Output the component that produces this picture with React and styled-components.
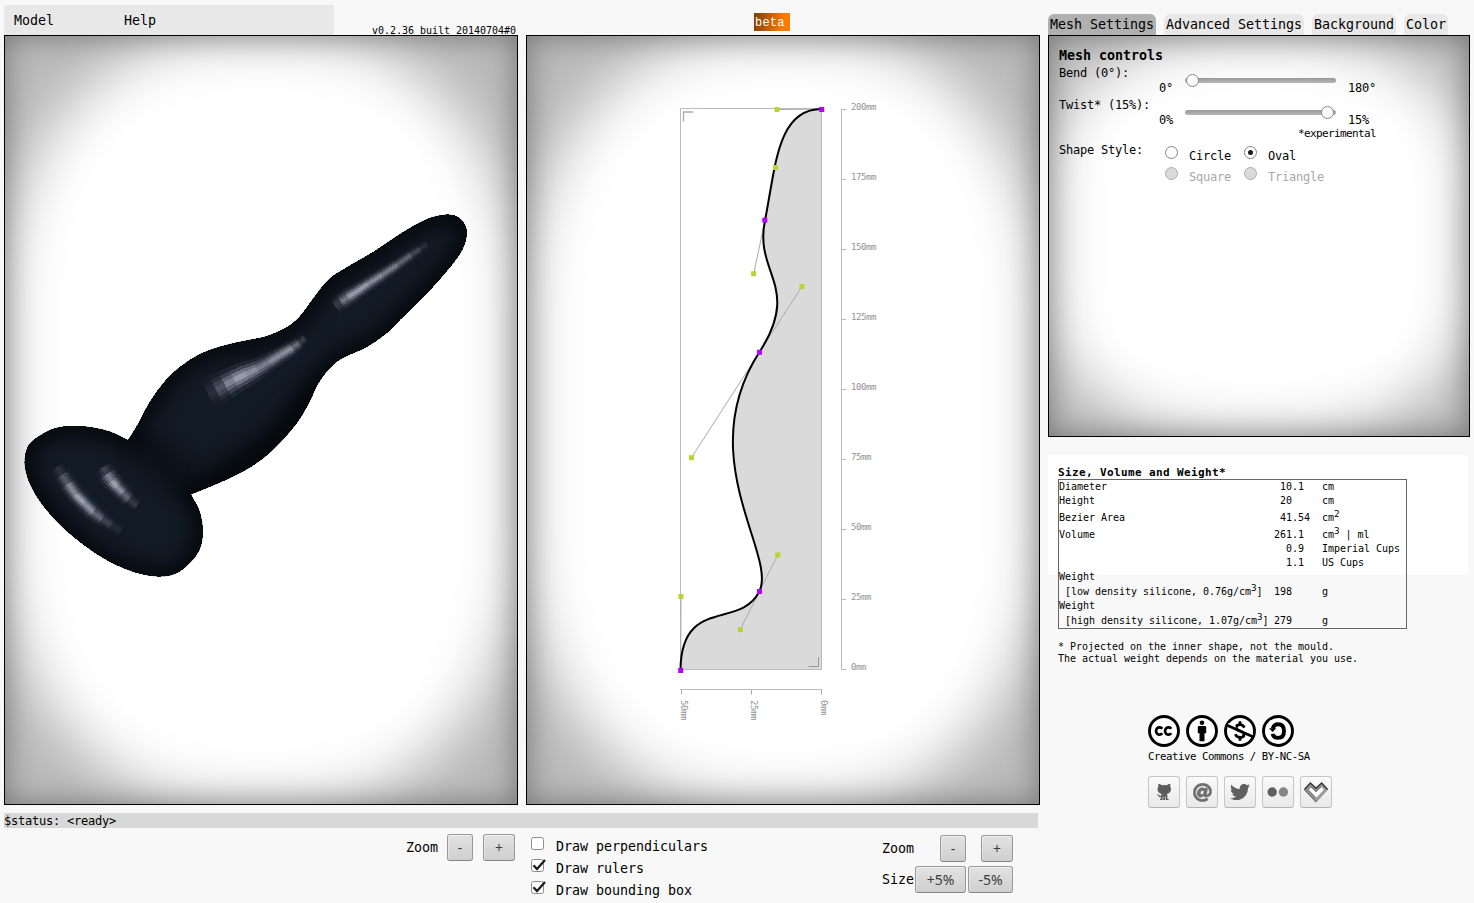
import React from "react";
import styled, { createGlobalStyle, css } from "styled-components";
import { FaTwitter, FaAt } from "react-icons/fa";

const GlobalStyle = createGlobalStyle`
  * { box-sizing: border-box; }
  body {
    margin: 0;
    background: #f8f8f8;
    color: #000;
    font-family: "DejaVu Sans Mono", monospace;
    overflow: hidden;
  }
`;

/* Monospace text with a fixed advance (px) per character. */
const mono = (size, advance) => css`
  font-size: ${size}px;
  letter-spacing: ${(advance - size * 0.60205).toFixed(4)}px;
  white-space: pre;
`;

const Page = styled.div`
  display: flex;
  gap: 8px;
  width: 1474px;
  height: 903px;
  padding-left: 4px;
`;

const Main = styled.main`
  display: flex;
  flex-direction: column;
  width: 1036px;
`;

const Side = styled.aside`
  display: flex;
  flex-direction: column;
  width: 422px;
`;

const Header = styled.header`
  display: flex;
  height: 35px;
`;

const Menu = styled.nav`
  display: flex;
  width: 330px;
  height: 30px;
  margin-top: 5px;
  padding-left: 10px;
  background: #e8e8e8;
`;

const MenuItem = styled.span`
  ${mono(13.33, 8)}
  width: 110px;
  line-height: 32px;
`;

const Version = styled.span`
  ${mono(10, 6)}
  width: 182px;
  padding-top: 25px;
  text-align: right;
  line-height: 12px;
`;

const Beta = styled.span`
  margin: 13px 0 0 238px;
  width: 36px;
  height: 18px;
  padding-left: 1px;
  background: linear-gradient(100deg, #7d3e00, #ff7b00 80%);
  color: #fff;
  font: 12px/20px "Liberation Mono", monospace;
  letter-spacing: 0.2px;
`;

const Panels = styled.div`
  display: flex;
  gap: 8px;
`;

const Panel = styled.section`
  position: relative;
  overflow: hidden;
  width: ${(p) => p.$w}px;
  height: ${(p) => p.$h}px;
  border: 1px solid #000;
  background: #b9b9b9;

  &::before {
    content: "";
    position: absolute;
    inset: 0;
    background: #fff;
    border-radius: 42% / 33%;
    filter: blur(29px);
  }
  &::after {
    content: "";
    position: absolute;
    inset: 0;
    box-shadow: inset 0 0 30px rgba(0, 0, 0, 0.37);
    pointer-events: none;
  }
  > * {
    position: relative;
    z-index: 1;
  }
`;

const Canvas = styled.svg`
  display: block;
`;

const Status = styled.div`
  ${mono(12, 7)}
  width: 1034px;
  height: 15px;
  margin-top: 8px;
  background: #d8d8d8;
  line-height: 16px;
`;

const Controls = styled.div`
  display: flex;
`;

const ControlRow = styled.div`
  display: flex;
  align-items: center;
  height: 27px;
  margin-bottom: 4px;
`;

const PreviewZoom = styled.div`
  width: 527px;
  padding: 6px 0 0 402px;
`;

const Checks = styled.div`
  width: 351px;
  padding-top: 9px;
`;

const EditorZoom = styled.div`
  padding-top: 7px;
`;

const ControlLabel = styled.span`
  ${mono(13.33, 8)}
  width: ${(p) => p.$w}px;
`;

const Button = styled.button`
  width: ${(p) => p.$w}px;
  height: 27px;
  margin: 0 ${(p) => p.$mr || 0}px 0 0;
  padding: 0;
  border: 1px solid #999;
  border-bottom-color: #858585;
  border-radius: 3px;
  background: linear-gradient(#e2e2e2, #cfcfcf);
  box-shadow: inset 0 1px 0 #f2f2f2, inset 1px 0 0 rgba(255, 255, 255, 0.35);
  color: #3c3c3c;
  font: 14px/24px "Noto Sans", sans-serif;
`;

const CheckRow = styled.label`
  display: flex;
  height: 22px;
  ${mono(13.33, 8)}
  line-height: 20px;
  svg {
    width: 25px;
    height: 16px;
    overflow: visible;
  }
`;

const Tabs = styled.nav`
  display: flex;
  gap: 8px;
  height: 35px;
  padding-top: 14px;
`;

const Tab = styled.span`
  ${mono(13.33, 8)}
  height: 21px;
  width: ${(p) => p.$w}px;
  padding-left: 2px;
  border-radius: 6px 6px 0 0;
  background: ${(p) => (p.$active ? "#b0b0b0" : "#e8e8e8")};
  line-height: 22px;
`;

const Settings = styled.div`
  padding: 11px 0 0 10px;
`;

const SettingsTitle = styled.h2`
  ${mono(13.33, 8)}
  margin: 0;
  height: 17px;
  line-height: 17px;
`;

const SettingRow = styled.div`
  ${mono(12, 7)}
  display: flex;
  height: ${(p) => p.$h || 32}px;
  line-height: 18px;
`;

const SettingLabel = styled.span`
  width: 100px;
`;

const RangeEnd = styled.span`
  width: ${(p) => p.$w}px;
  padding-top: 15px;
`;

const Track = styled.div`
  display: flex;
  align-items: center;
  justify-content: ${(p) => (p.$end ? "flex-end" : "flex-start")};
  width: 151px;
  height: 5px;
  margin: 14px 12px 0 0;
  border-radius: 3px;
  background: linear-gradient(#989898, #b8b8b8);
`;

const Thumb = styled.span`
  width: 13px;
  height: 13px;
  margin: 0 2px 0 1px;
  border: 1px solid #888;
  border-radius: 50%;
  background: linear-gradient(#fff, #f6f6f6);
`;

const Note = styled.div`
  ${mono(11, 6)}
  height: 13px;
  padding-left: 239px;
  line-height: 12px;
`;

const Options = styled.div`
  display: grid;
  grid-template-columns: 79px 100px;
  grid-auto-rows: 21px;
  padding-left: 6px;
`;

const Option = styled.span`
  display: flex;
  gap: 11px;
  color: ${(p) => (p.$disabled ? "#a8a8a8" : "#000")};
  line-height: 31px;
`;

const Radio = styled.span`
  display: grid;
  place-items: center;
  width: 13px;
  height: 13px;
  margin-top: 5px;
  border: 1px solid ${(p) => (p.$disabled ? "#adadad" : "#858585")};
  border-radius: 50%;
  background: ${(p) => (p.$disabled ? "#dadada" : "#fff")};
  &::after {
    content: "";
    width: 5px;
    height: 5px;
    border-radius: 50%;
    background: ${(p) => (p.$on ? "#1c1c1c" : "transparent")};
  }
`;

const Stats = styled.section`
  width: 420px;
  height: 120px;
  margin-top: 18px;
  padding: 11px 0 0 10px;
  background: #fff;
`;

const StatsTitle = styled.h3`
  ${mono(11, 7)}
  margin: 0;
  height: 13px;
  line-height: 13px;
`;

const StatsTable = styled.div`
  ${mono(10, 6)}
  width: 349px;
  height: 150px;
  border: 1px solid #666;
`;

const StatsRow = styled.div`
  display: flex;
  align-items: flex-end;
  height: ${(p) => p.$h}px;
  line-height: 14px;
`;

const Cell = styled.span`
  width: ${(p) => p.$w}px;
  height: 14px;
`;

const Sup = styled.sup`
  position: relative;
  top: -4px;
  vertical-align: baseline;
  line-height: 0;
  font-size: 9.3px;
`;

const Footnote = styled.p`
  ${mono(10, 6)}
  margin: 66px 0 0 10px;
  height: 24px;
  line-height: 12px;
`;

const Footer = styled.footer`
  display: flex;
  flex-direction: column;
  margin: 50px 0 0 100px;
`;

const IconRow = styled.div`
  display: flex;
  gap: 6px;
`;

const License = styled.div`
  ${mono(10.7, 6)}
  height: 29px;
  line-height: 19px;
`;

const SocialButton = styled.span`
  display: grid;
  place-items: center;
  width: 32px;
  height: 32px;
  border: 1px solid #c6c6c6;
  border-bottom-color: #b4b4b4;
  border-radius: 3px;
  background: linear-gradient(#fafafa, #e9e9e9);
  color: #5c5c5c;
`;

/* ---------- 3D preview ---------- */

const OUTLINE_BASE = [
  [128, 440], [110, 431.5], [90, 427], [73, 426], [55, 428], [39, 436], [28, 446],
  [24.5, 463], [29, 482], [41, 503], [60, 525], [85, 546], [110, 562], [135, 572.5],
  [157, 576.5], [175, 574], [190, 563], [200, 549], [203, 532], [200, 512], [191, 494.5],
];

const OUTLINE_BODY = [
  [191, 494.5], [212, 486], [230, 478], [250, 467.5], [273, 450], [297, 423], [310, 401],
  [318, 384], [330, 368], [343, 358], [367, 347], [387, 333], [400, 320], [433, 287],
  [458, 257], [466, 240], [466, 227], [458, 217], [446, 214.5], [427, 219], [403, 232],
  [373, 252], [347, 267], [328, 280], [312, 300], [300, 316], [287, 327], [267, 336],
  [243, 341], [220, 346.5], [200, 354], [181, 366], [165, 381], [149, 403], [138, 424],
  [128, 440],
];

function smooth(points) {
  let d = "";
  for (let i = 0; i < points.length - 1; i++) {
    const a = points[Math.max(0, i - 1)];
    const b = points[i];
    const c = points[i + 1];
    const e = points[Math.min(points.length - 1, i + 2)];
    d += ` C${b[0] + (c[0] - a[0]) / 6} ${b[1] + (c[1] - a[1]) / 6} ${c[0] - (e[0] - b[0]) / 6} ${c[1] - (e[1] - b[1]) / 6} ${c[0]} ${c[1]}`;
  }
  return d;
}

const SOLID = `M128 440${smooth(OUTLINE_BASE)}${smooth(OUTLINE_BODY)}Z`;

/* Each spine point: x, y, half width, brightness. */
const HIGHLIGHTS = [
  [[335, 306, 9, 0.1], [341, 302, 9, 0.45], [348, 297, 9, 0.9], [356, 292, 8, 1], [368, 284, 7.5, 0.9], [382, 275, 7, 0.78], [397, 265, 6.5, 0.65], [411, 255, 6, 0.45], [420, 249, 5, 0.25], [427, 244, 5, 0.08]],
  [[208, 394, 16, 0.06], [216, 390, 16, 0.26], [225, 385, 15, 0.6], [234, 380, 14, 0.95], [246, 374, 13, 1], [257, 369, 11, 0.75], [269, 362, 9, 0.75], [282, 354, 8.5, 0.95], [292, 348, 8, 0.8], [299, 343, 7, 0.4], [305, 338, 6, 0.15]],
  [[57, 467, 8, 0.05], [62, 475, 9, 0.3], [68, 484, 9, 0.65], [76, 495, 9, 1], [84, 503, 9, 1], [93, 512, 9, 0.75], [102, 519, 8, 0.42], [111, 525, 7, 0.2], [121, 531, 7, 0.04]],
  [[103, 467, 9, 0.1], [107, 474, 10, 0.5], [112, 481, 10, 1], [117, 487, 9, 1], [123, 493, 9, 0.7], [129, 499, 8, 0.38], [137, 506, 7, 0.08]],
];

const BANDS = [-1, -0.7, -0.45, -0.2, 0.2, 0.45, 0.7, 1];

function facets(spine) {
  const normal = (i) => {
    const p = spine[Math.max(0, i - 1)];
    const q = spine[Math.min(spine.length - 1, i + 1)];
    const len = Math.hypot(q[0] - p[0], q[1] - p[1]);
    return [-(q[1] - p[1]) / len, (q[0] - p[0]) / len];
  };
  const out = [];
  for (let i = 0; i < spine.length - 1; i++) {
    const a = spine[i];
    const b = spine[i + 1];
    const na = normal(i);
    const nb = normal(i + 1);
    for (let k = 0; k < BANDS.length - 1; k++) {
      const u = BANDS[k];
      const v = BANDS[k + 1];
      const mid = (u + v) / 2;
      const alpha = ((a[3] + b[3]) / 2) * Math.exp(-mid * mid * 3) * 0.76;
      const at = (s, n, t) => `${s[0] + n[0] * s[2] * t},${s[1] + n[1] * s[2] * t}`;
      out.push({ points: [at(a, na, u), at(b, nb, u), at(b, nb, v), at(a, na, v)].join(" "), alpha });
    }
  }
  return out;
}

function Preview() {
  return (
    <Canvas width="512" height="768" viewBox="5 36 512 768">
      <defs>
        <clipPath id="solid"><path d={SOLID} /></clipPath>
        <filter id="soft" x="-20%" y="-20%" width="140%" height="140%" colorInterpolationFilters="sRGB">
          <feGaussianBlur stdDeviation="9" />
        </filter>
      </defs>
      <path d={SOLID} fill="#121a25" shapeRendering="crispEdges" />
      <g clipPath="url(#solid)">
        <path d={SOLID} fill="none" stroke="#020303" strokeWidth="17" opacity="0.8" filter="url(#soft)" />
        <path d="M128 440Q165 455 191 494" fill="none" stroke="#06080b" strokeWidth="30" opacity="0.5" filter="url(#soft)" />
        <path d="M205 480 Q290 435 312 385" fill="none" stroke="#000" strokeWidth="22" opacity="0.4" filter="url(#soft)" />
        {HIGHLIGHTS.flatMap((h, i) =>
          facets(h).map((f, k) => (
            <polygon key={`${i}-${k}`} points={f.points} fill="#c4c8d6" opacity={f.alpha} shapeRendering="crispEdges" />
          ))
        )}
      </g>
    </Canvas>
  );
}

/* ---------- Bezier editor ---------- */

const CURVE =
  "M821.5 109 C777 109 775.5 167.5 765 220.5 C753.7 273.7 802 286.5 759.3 352.3 C691.5 457.7 777.8 555 759.3 591.5 C740.3 629.7 681 596.5 680.5 670";
const HANDLES = [
  [821.5, 109, 777, 109.5], [765, 220.5, 775.5, 167.5], [765, 220.5, 753.7, 273.7],
  [759.3, 352.3, 802, 286.5], [759.3, 352.3, 691.5, 457.7], [759.3, 591.5, 777.8, 555],
  [759.3, 591.5, 740.3, 629.7], [680.7, 670, 681, 596.5],
];
const ANCHORS = [[821.7, 109.5], [764.8, 220.2], [759.5, 352.3], [759.5, 591.5], [680.7, 670.5]];

const RulerText = styled.text`
  ${mono(9, 5)}
  fill: #939393;
`;

function Editor() {
  return (
    <Canvas width="512" height="768" viewBox="527 36 512 768">
      <path d={`${CURVE} L821.5 670 L821.5 109Z`} fill="#dadada" />
      <rect x="680.5" y="108.5" width="141" height="561" fill="none" stroke="#bbb" />
      <path d="M683.5 121.500V112H693" fill="none" stroke="#aaa" strokeWidth="1.3" />
      <path d="M818.500 657V666.500H808.500" fill="none" stroke="#999" />
      {HANDLES.map(([x1, y1, x2, y2], i) => (
        <line key={i} x1={x1} y1={y1} x2={x2} y2={y2} stroke="#aaa" strokeWidth="1" />
      ))}
      <path d={CURVE} fill="none" stroke="#000" strokeWidth="2" />
      {HANDLES.map(([, , x, y], i) => (
        <rect key={i} x={x - 2.5} y={y - 2.5} width="5" height="5" fill="#b8d432" />
      ))}
      {ANCHORS.map(([x, y], i) => (
        <rect key={i} x={x - 2.5} y={y - 2.5} width="5" height="5" fill="#b400ff" />
      ))}
      <path d="M841.500 109V670M680 689.500H822" stroke="#bbb" fill="none" />
      {[200, 175, 150, 125, 100, 75, 50, 25, 0].map((mm, i) => (
        <g key={mm}>
          <line x1="841" x2="846.500" y1={109.5 + i * 70} y2={109.5 + i * 70} stroke="#bbb" />
          <RulerText x="851" y={110 + i * 70}>{mm}mm</RulerText>
        </g>
      ))}
      {[[50, 681.5], [25, 751.5], [0, 821.5]].map(([mm, x]) => (
        <g key={mm}>
          <line x1={x} x2={x} y1="690" y2="694.500" stroke="#aaa" />
          <RulerText transform={`translate(${x - 1} 700) rotate(90)`}>{mm}mm</RulerText>
        </g>
      ))}
    </Canvas>
  );
}

function Check({ on, children }) {
  return (
    <CheckRow>
      <svg viewBox="0 0 25 16">
        <rect x="0.5" y="0.500" width="12" height="12" rx="2" fill="#fff" stroke="#8c8c8c" />
        {on && <path d="M2.500 6.200L6 10L14 1" fill="none" stroke="#1e1e1e" strokeWidth="2.300" />}
      </svg>
      {children}
    </CheckRow>
  );
}

/* ---------- Icons ---------- */

const Badge = ({ children }) => (
  <svg width="32" height="32" viewBox="0 0 32 32" fill="none" stroke="#000">
    <circle cx="16" cy="16" r="14.500" fill="#fff" strokeWidth="2.900" />
    {children}
  </svg>
);

const LicenseCC = () => (
  <Badge>
    <path d="M14.300 13.700A3.500 3.700 0 1 0 14.300 18.300M23.300 13.700A3.500 3.700 0 1 0 23.300 18.300" strokeWidth="2.700" />
  </Badge>
);

const LicenseBy = () => (
  <Badge>
    <g fill="#000" stroke="none">
      <circle cx="16" cy="7.800" r="2.300" />
      <path d="M12.900 10.900H19.100Q20.200 10.900 20.200 12V18.200H18.500V26.200H13.500V18.200H11.800V12Q11.800 10.900 12.900 10.900Z" />
    </g>
  </Badge>
);

const LicenseNC = () => (
  <Badge>
    <path d="M20.400 12.600Q19 9.600 16 9.600Q12.200 9.600 12.200 12.500Q12.200 14.700 16 16Q20 17.300 20 19.500Q20 22.500 16.200 22.500Q12.700 22.500 11.300 19.300M16 6.300V10M16 22V25.800" strokeWidth="2.800" />
    <path d="M4 8.700L12 12.300M20 15.900L29 19.900" stroke="#fff" strokeWidth="1.300" />
    <path d="M2.500 10L29.500 22" strokeWidth="2.700" />
  </Badge>
);

const LicenseSA = () => (
  <Badge>
    <path d="M10.800 13.500Q11.800 9.300 16.200 9.300Q22 9.300 22 16.100Q22 22.900 16.200 22.900Q11.500 22.900 10.600 18.900" strokeWidth="3.900" />
    <path d="M7 13.300H14.200L10.600 17Z" fill="#000" stroke="none" />
  </Badge>
);

const Octocat = () => (
  <svg width="16" height="18" viewBox="0 0 16 18">
    <path
      fill="currentColor"
      d="M2.600.8C3.900.9 5 1.700 5.600 2.200Q8.300 1.700 11 2.200C11.700 1.600 12.800.9 14 .8C14.500 2 14.500 2.900 14.200 3.800C15.800 5.800 15.300 10.300 10.700 10.900C11.300 11.500 11.400 12 11.400 13V15.700H12.600V17H9.800V13.500H9.100V17H7.300V13.500H6.700V17H4V15.700H5.100V14.200C2.500 14.700 2.700 12.600 1.500 12.100L.6 11.500C2.700 10.800 3 13 5.100 12.700C5.100 11.900 5.300 11.400 5.900 10.900C1.200 10.300.8 5.800 2.400 3.800C2.100 2.800 2.100 1.900 2.600.8Z"
    />
  </svg>
);

const Dots = () => (
  <svg width="22" height="10" viewBox="0 0 22 10">
    <circle cx="5.200" cy="5" r="4.700" fill="#5f5f5f" />
    <circle cx="16.400" cy="5" r="4.700" fill="#868686" />
  </svg>
);

const Heart = () => (
  <svg width="26" height="24" viewBox="0 0 26 24">
    <path d="M.8 9.500L7.300 2.300L13 7.600L18.700 2.300L25.200 9.500L13 22.700Z" fill="#9a9a9a" />
    <path d="M1.500 9.500L7.300 3L13 8.400L18.700 3L24.500 9.500" fill="none" stroke="#3c3c3c" strokeWidth="1.500" />
    <path d="M1.500 9.500L13 21.700" fill="none" stroke="#777" strokeWidth="1.200" />
    <path d="M5 9.700L7.800 6.700L13 11.700L18.200 6.700L21 9.700L13 18Z" fill="#fafafa" />
    <path d="M13 18L5 9.700L7.800 6.700L13 11.700L18.200 6.700" fill="none" stroke="#555" strokeWidth="0.900" />
  </svg>
);

const STATS = [
  [14, "Diameter", " 10.1", "cm"],
  [14, "Height", " 20", "cm"],
  [17, "Bezier Area", " 41.54", <>cm<Sup>2</Sup></>],
  [17, "Volume", "261.1", <>cm<Sup>3</Sup> | ml</>],
  [14, "", "  0.9", "Imperial Cups"],
  [14, "", "  1.1", "US Cups"],
  [14, "Weight", "", ""],
  [15, <> [low density silicone, 0.76g/cm<Sup>3</Sup>]</>, "198", "g"],
  [14, "Weight", "", ""],
  [15, <> [high density silicone, 1.07g/cm<Sup>3</Sup>]</>, "279", "g"],
];

export default function App() {
  return (
    <Page>
      <GlobalStyle />
      <Main>
        <Header>
          <Menu>
            <MenuItem>Model</MenuItem>
            <MenuItem>Help</MenuItem>
          </Menu>
          <Version>v0.2.36 built 20140704#0</Version>
          <Beta>beta</Beta>
        </Header>
        <Panels>
          <Panel $w={514} $h={770}><Preview /></Panel>
          <Panel $w={514} $h={770}><Editor /></Panel>
        </Panels>
        <Status>$status: &lt;ready&gt;</Status>
        <Controls>
          <PreviewZoom>
            <ControlRow>
              <ControlLabel $w={41}>Zoom</ControlLabel>
              <Button $w={26} $mr={10}>-</Button>
              <Button $w={32}>+</Button>
            </ControlRow>
          </PreviewZoom>
          <Checks>
            <Check>Draw perpendiculars</Check>
            <Check on>Draw rulers</Check>
            <Check on>Draw bounding box</Check>
          </Checks>
          <EditorZoom>
            <ControlRow>
              <ControlLabel $w={58}>Zoom</ControlLabel>
              <Button $w={26} $mr={15}>-</Button>
              <Button $w={32}>+</Button>
            </ControlRow>
            <ControlRow>
              <ControlLabel $w={33}>Size</ControlLabel>
              <Button $w={51} $mr={2}>+5%</Button>
              <Button $w={45}>-5%</Button>
            </ControlRow>
          </EditorZoom>
        </Controls>
      </Main>
      <Side>
        <Tabs>
          <Tab $w={108} $active>Mesh Settings</Tab>
          <Tab $w={140}>Advanced Settings</Tab>
          <Tab $w={84}>Background</Tab>
          <Tab $w={44}>Color</Tab>
        </Tabs>
        <Panel $w={422} $h={402}>
          <Settings>
            <SettingsTitle>Mesh controls</SettingsTitle>
            <SettingRow>
              <SettingLabel>Bend (0°):</SettingLabel>
              <RangeEnd $w={26}>0°</RangeEnd>
              <Track><Thumb /></Track>
              <RangeEnd $w={40}>180°</RangeEnd>
            </SettingRow>
            <SettingRow>
              <SettingLabel>Twist* (15%):</SettingLabel>
              <RangeEnd $w={26}>0%</RangeEnd>
              <Track $end><Thumb /></Track>
              <RangeEnd $w={40}>15%</RangeEnd>
            </SettingRow>
            <Note>*experimental</Note>
            <SettingRow $h={44}>
              <SettingLabel>Shape Style:</SettingLabel>
              <Options>
                <Option><Radio />Circle</Option>
                <Option><Radio $on />Oval</Option>
                <Option $disabled><Radio $disabled />Square</Option>
                <Option $disabled><Radio $disabled />Triangle</Option>
              </Options>
            </SettingRow>
          </Settings>
        </Panel>
        <Stats>
          <StatsTitle>Size, Volume and Weight*</StatsTitle>
          <StatsTable>
            {STATS.map(([h, label, value, unit], i) => (
              <StatsRow key={i} $h={h}>
                <Cell $w={215}>{label}</Cell>
                <Cell $w={48}>{value}</Cell>
                <Cell $w={84}>{unit}</Cell>
              </StatsRow>
            ))}
          </StatsTable>
        </Stats>
        <Footnote>{"* Projected on the inner shape, not the mould.\nThe actual weight depends on the material you use."}</Footnote>
        <Footer>
          <IconRow>
            <LicenseCC />
            <LicenseBy />
            <LicenseNC />
            <LicenseSA />
          </IconRow>
          <License>Creative Commons / BY-NC-SA</License>
          <IconRow>
            <SocialButton><Octocat /></SocialButton>
            <SocialButton><FaAt size={19} color="#707070" stroke="#707070" strokeWidth="14" /></SocialButton>
            <SocialButton><FaTwitter size={20} color="#606060" /></SocialButton>
            <SocialButton><Dots /></SocialButton>
            <SocialButton><Heart /></SocialButton>
          </IconRow>
        </Footer>
      </Side>
    </Page>
  );
}
